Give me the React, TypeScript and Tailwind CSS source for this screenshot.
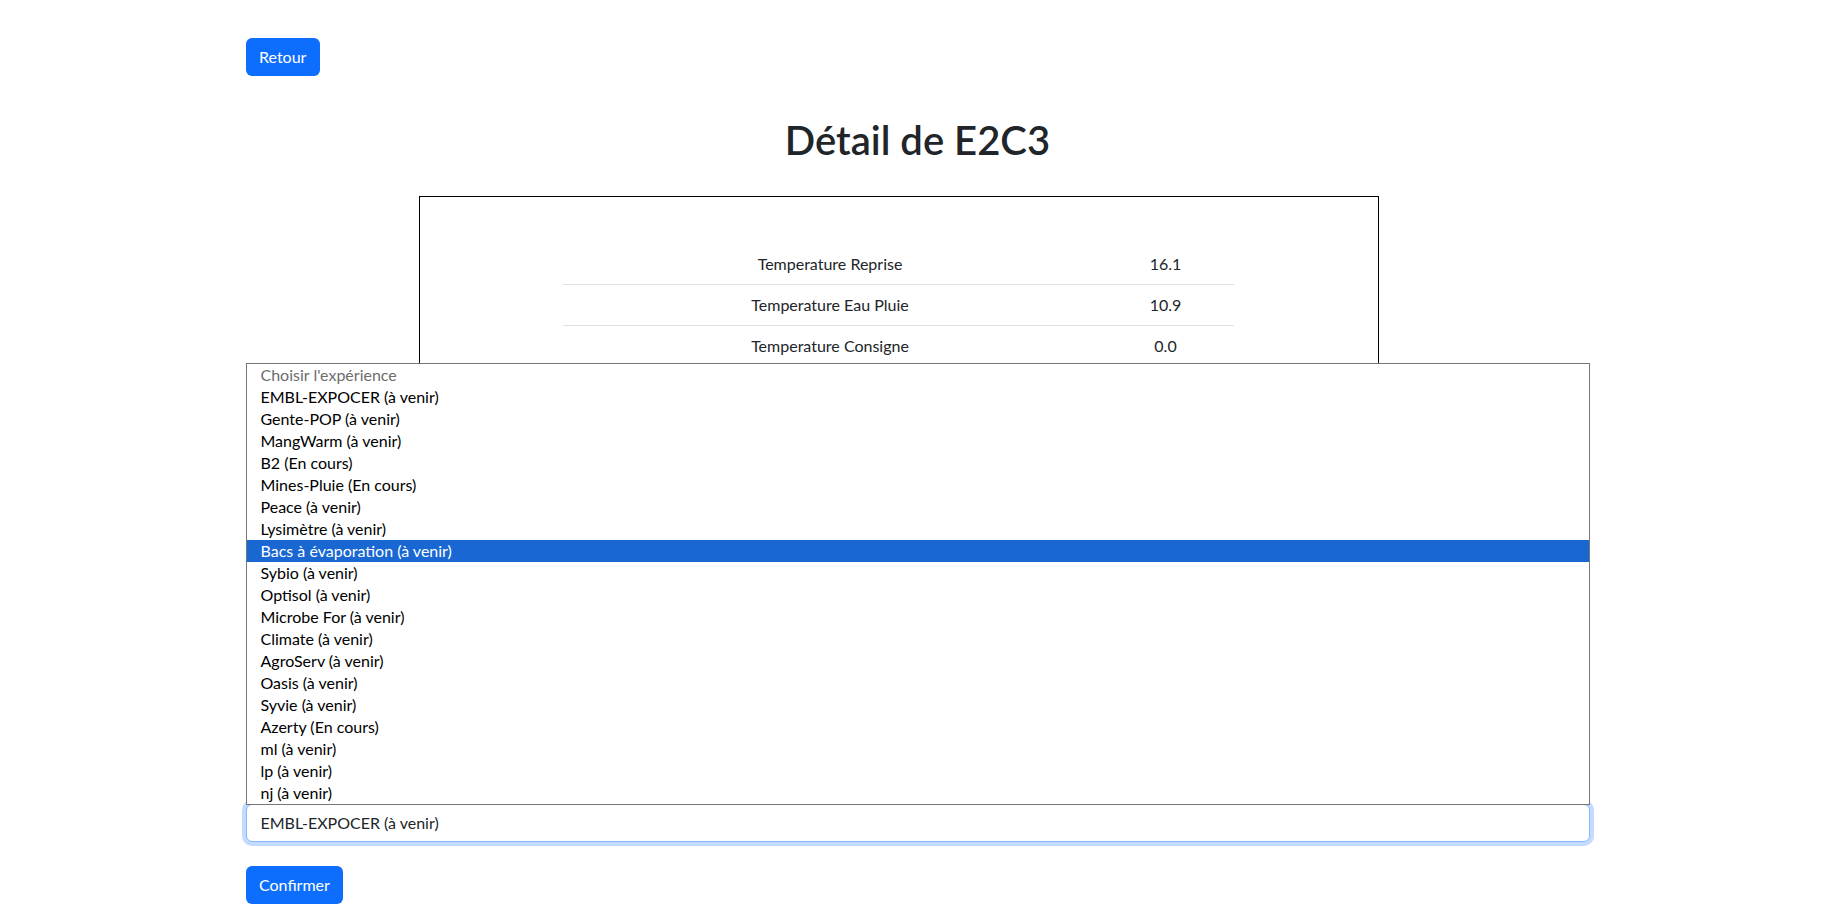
import React from "react";

const options: string[] = [
  "EMBL-EXPOCER (à venir)",
  "Gente-POP (à venir)",
  "MangWarm (à venir)",
  "B2 (En cours)",
  "Mines-Pluie (En cours)",
  "Peace (à venir)",
  "Lysimètre (à venir)",
  "Bacs à évaporation (à venir)",
  "Sybio (à venir)",
  "Optisol (à venir)",
  "Microbe For (à venir)",
  "Climate (à venir)",
  "AgroServ (à venir)",
  "Oasis (à venir)",
  "Syvie (à venir)",
  "Azerty (En cours)",
  "ml (à venir)",
  "lp (à venir)",
  "nj (à venir)",
];

const rows: [string, string][] = [
  ["Temperature Reprise", "16.1"],
  ["Temperature Eau Pluie", "10.9"],
  ["Temperature Consigne", "0.0"],
  ["Humidite Reprise", "62.0"],
  ["Humidite Consigne", "0.0"],
  ["Pression", "1013.2"],
];

export default function App() {
  return (
    <div
      className="min-h-[910px] bg-white text-[#212529]"
      style={{ fontFamily: "Lato, 'Noto Sans', sans-serif" }}
    >
      <div className="mx-auto w-[1344px] pt-[38px]">
        <button className="h-[38px] rounded-[6px] bg-[#0d6efd] px-[13.5px] text-[16px] leading-6 text-white">
          Retour
        </button>

        <h1 className="mt-[40px] text-center text-[40px] font-semibold leading-[48px]">
          Détail de E2C3
        </h1>

        <div className="ml-[173px] mt-[32px] h-[584px] w-[960px] border border-black pt-[47px]">
          <table className="mx-auto w-[671px] border-collapse text-center text-[16px]">
            <tbody>
              {rows.map(([k, v]) => (
                <tr key={k} className="border-b border-[#dee2e6]">
                  <td className="w-[534px] py-2 leading-6">{k}</td>
                  <td className="w-[137px] py-2 leading-6">{v}</td>
                </tr>
              ))}
            </tbody>
          </table>
        </div>

        <div className="relative mt-6">
          <div className="absolute bottom-full left-0 right-0 mb-[-1px] border border-[#767676] bg-white">
            <div className="h-[22px] pl-[14px] text-[16px] leading-[22px] text-[#6d6d6d]">
              Choisir l'expérience
            </div>
            {options.map((o, i) => (
              <div
                key={o}
                className={
                  i === 7
                    ? "h-[22px] bg-[#1967d2] pl-[14px] text-[16px] leading-[22px] text-white"
                    : "h-[22px] pl-[14px] text-[16px] leading-[22px] text-black"
                }
              >
                {o}
              </div>
            ))}
          </div>
          <div className="flex h-[38px] items-center rounded-[6px] border border-[#86b7fe] bg-white pl-[14px] pr-3 text-[16px] shadow-[0_0_0_4px_rgba(13,110,253,0.25)]">
            EMBL-EXPOCER (à venir)
          </div>
        </div>

        <button className="mt-6 h-[38px] rounded-[6px] bg-[#0d6efd] px-[13.5px] text-[16px] leading-6 text-white">
          Confirmer
        </button>
      </div>
    </div>
  );
}
